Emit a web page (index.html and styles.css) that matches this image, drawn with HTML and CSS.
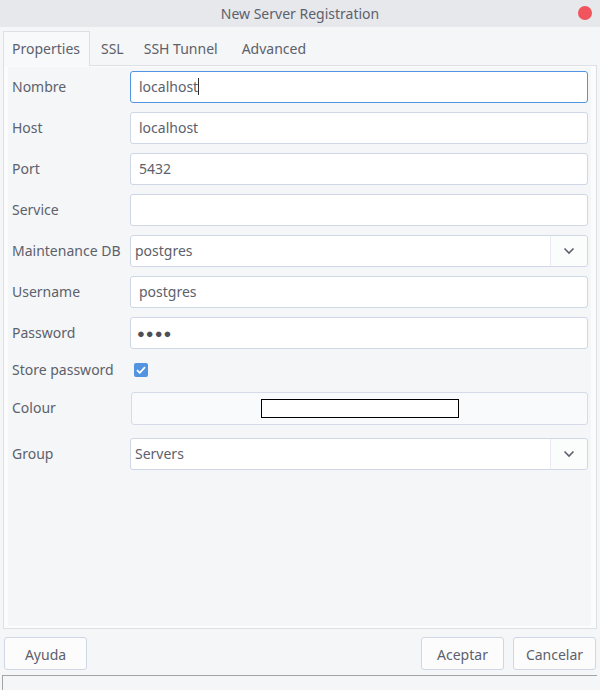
FILE: index.html
```html
<!DOCTYPE html>
<html>
<head>
<meta charset="utf-8">
<link rel="stylesheet" href="styles.css">
</head>
<body>
<div class="window">
  <div class="titlebar">
    <span></span>
    <span class="title">New Server Registration</span>
    <span class="close"></span>
  </div>
  <div class="tabs">
    <div class="tab active">Properties</div>
    <div class="tab">SSL</div>
    <div class="tab">SSH Tunnel</div>
    <div class="tab">Advanced</div>
  </div>
  <div class="pane">
    <div class="content">
      <div class="form">
        <label class="lbl">Nombre</label>
        <div class="input focus">localhost<span class="caret"></span></div>
        <label class="lbl">Host</label>
        <div class="input">localhost</div>
        <label class="lbl">Port</label>
        <div class="input">5432</div>
        <label class="lbl">Service</label>
        <div class="input"></div>
        <label class="lbl">Maintenance DB</label>
        <div class="select"><span class="sel-text">postgres</span><span class="sel-btn"><svg width="12" height="8" viewBox="0 0 12 8"><path d="M1.5 1.5 L6 6 L10.5 1.5" fill="none" stroke="#5c616c" stroke-width="1.6"/></svg></span></div>
        <label class="lbl">Username</label>
        <div class="input">postgres</div>
        <label class="lbl">Password</label>
        <div class="input dots">&#9679;&#9679;&#9679;&#9679;</div>
        <label class="lbl short">Store password</label>
        <div class="checkrow"><span class="check"><svg width="10" height="8" viewBox="0 0 10 8"><path d="M1 4.2 L3.8 6.8 L9 1.2" fill="none" stroke="#fff" stroke-width="1.8"/></svg></span></div>
        <label class="lbl colour-lbl">Colour</label>
        <div class="colour"><span class="swatch"></span></div>
        <label class="lbl">Group</label>
        <div class="select"><span class="sel-text">Servers</span><span class="sel-btn"><svg width="12" height="8" viewBox="0 0 12 8"><path d="M1.5 1.5 L6 6 L10.5 1.5" fill="none" stroke="#5c616c" stroke-width="1.6"/></svg></span></div>
      </div>
    </div>
  </div>
  <div class="buttons">
    <button class="btn">Ayuda</button>
    <span class="spacer"></span>
    <button class="btn">Aceptar</button>
    <button class="btn">Cancelar</button>
  </div>
  <div class="status"></div>
</div>
</body>
</html>
```

FILE: styles.css
```css
html, body {
  margin: 0;
  padding: 0;
}
body {
  width: 600px;
  height: 690px;
  background: #f5f6f7;
  font-family: "Noto Sans", "Open Sans", sans-serif;
  font-size: 14px;
  color: #5c616c;
  overflow: hidden;
}
.window {
  display: flex;
  flex-direction: column;
  height: 690px;
}
.titlebar {
  height: 27px;
  background: #e7e8eb;
  display: grid;
  grid-template-columns: 1fr auto 1fr;
  align-items: center;
}
.title {
  font-size: 14px;
  color: #5c616c;
}
.close {
  justify-self: end;
  width: 14px;
  height: 14px;
  border-radius: 50%;
  background: #f0545c;
  margin-right: 8px;
}
.tabs {
  display: flex;
  margin-top: 4px;
  padding-left: 3px;
  height: 34px;
}
.tab {
  height: 34px;
  box-sizing: border-box;
  padding: 2px 10px 0 10px;
  line-height: 32px;
  color: #5c616c;
}
.tab:nth-child(3) {
  padding-right: 12px;
}
.tab:nth-child(4) {
  padding-left: 12px;
}
.tab.active {
  border: 1px solid #dcdfe3;
  border-bottom: none;
  background: #f8f9fa;
  padding: 1px 9px 0 8px;
  margin-right: 1px;
  position: relative;
  z-index: 1;
  height: 35px;
}
.pane {
  margin: 0 3px;
  height: 566px;
  box-sizing: border-box;
  border: 1px solid #dcdfe3;
  background: #fcfcfc;
  padding: 1px 5px 2px 4px;
  display: flex;
}
.content {
  flex: 1;
  background: #f5f6f7;
  padding: 4px 3px 0 4px;
}
.form {
  display: grid;
  grid-template-columns: 118px 1fr;
  row-gap: 9px;
  align-items: center;
}
.lbl {
  color: #5c616c;
  line-height: 20px;
}
.input {
  height: 32px;
  box-sizing: border-box;
  border: 1px solid #cfd6e6;
  border-radius: 3px;
  background: #ffffff;
  padding: 0 8px;
  line-height: 30px;
  color: #5c616c;
}
.input.focus {
  border-color: #5294e2;
}
.caret {
  display: inline-block;
  width: 1px;
  height: 17px;
  background: #2c2c2c;
  vertical-align: -3px;
}
.input.dots {
  font-size: 13px;
  letter-spacing: 1px;
  padding-left: 6px;
  color: #4b5059;
}
.select {
  height: 32px;
  box-sizing: border-box;
  border: 1px solid #cfd6e6;
  border-radius: 3px;
  background: #ffffff;
  display: flex;
  align-items: stretch;
}
.sel-text {
  flex: 1;
  padding-left: 4px;
  line-height: 30px;
}
.sel-btn {
  width: 36px;
  border-left: 1px solid #e8ebf1;
  background: #fbfcfc;
  display: flex;
  align-items: center;
  justify-content: center;
  border-radius: 0 3px 3px 0;
}
.checkrow {
  height: 25px;
  display: flex;
  align-items: center;
  padding-left: 4px;
}
.check {
  width: 14px;
  height: 14px;
  border-radius: 2px;
  background: #5294e2;
  display: flex;
  align-items: center;
  justify-content: center;
}
.colour {
  height: 33px;
  box-sizing: border-box;
  border: 1px solid #d5dbe8;
  border-radius: 3px;
  background: #f9fafb;
  display: flex;
  align-items: center;
  justify-content: center;
  margin-left: 1px;
  margin-bottom: 4px;
}
.colour-lbl {
  margin-bottom: 4px;
}
.swatch {
  width: 198px;
  height: 19px;
  box-sizing: border-box;
  border: 1px solid #000;
  background: #fff;
}
.buttons {
  display: flex;
  margin-top: 8px;
  padding: 0 4px 0 4px;
  gap: 9px;
}
.spacer {
  flex: 1;
}
.btn {
  width: 83px;
  height: 33px;
  box-sizing: border-box;
  border: 1px solid #cfd6e6;
  border-radius: 3px;
  background: #fcfcfd;
  font-family: "Noto Sans", "Open Sans", sans-serif;
  font-size: 14px;
  color: #5c616c;
  padding: 2px 0 0 0;
}
.status {
  margin: 5px 3px 0 2px;
  height: 14px;
  border-top: 1px solid #a4a4a4;
  border-left: 1px solid #a4a4a4;
  background: #f5f6f7;
}
```
